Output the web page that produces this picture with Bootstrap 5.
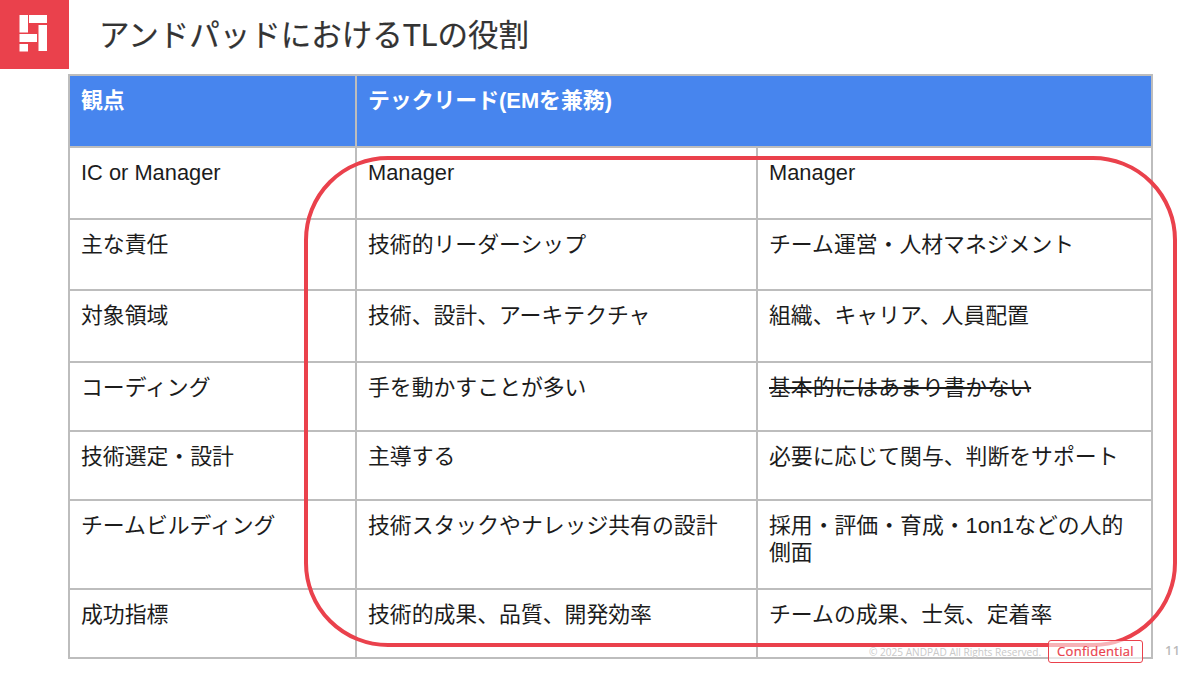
<!DOCTYPE html>
<html lang="ja">
<head>
<meta charset="utf-8">
<title>アンドパッドにおけるTLの役割</title>
<link rel="stylesheet" href="https://cdn.jsdelivr.net/npm/bootstrap@5.3.0/dist/css/bootstrap.min.css">
<style>
html,body{margin:0;height:100%;overflow:hidden;background:#fff}
.slide{position:relative;width:1200px;height:679px;font-family:"Liberation Sans","Noto Sans CJK JP",sans-serif;color:#1c1c1c}
.brand-box{width:69px;height:69px;background:#ea414c;flex:none}
.slide-title{margin:0 0 0 30px;font-family:Roboto,"Noto Sans CJK JP",sans-serif;font-size:30.500px;font-weight:400;line-height:71px;color:#333;-webkit-text-stroke:.2px #333}
.slide-table{table-layout:fixed;width:1083px;margin:3px 0 0 68px;border-collapse:collapse;font-size:21.850px;line-height:27px}
.slide-table td,.slide-table th{border:2px solid #bdbdbd;padding:11px 11px 0;vertical-align:top;font-weight:400}
.slide-table th{background:#4785ee;color:#fff;font-weight:700}
.h72{height:72px}.h71{height:71px}.h69{height:69px}.h89{height:89px}
.wipe{text-decoration:line-through}
.ring{position:absolute;left:304px;top:156px;width:873px;height:491px;border:4px solid #ea414c;border-radius:84px;pointer-events:none}
.copy{position:absolute;left:869px;top:645px;font-family:"Open Sans",sans-serif;font-size:10.100px;line-height:14px;color:#c9c9c9;white-space:nowrap}
.conf{position:absolute;left:1048px;top:640px;width:95px;height:23px;border:1.500px solid #ea414c;border-radius:3px;background:rgba(255,255,255,.6);color:#ea414c;font-family:"Open Sans",sans-serif;font-size:13px;font-weight:500;line-height:21px;text-align:center;letter-spacing:.3px;-webkit-text-stroke:.2px #ea414c}
.pageno{position:absolute;left:1165px;top:642px;font-family:"Open Sans",sans-serif;font-size:12.500px;line-height:17px;font-weight:600;color:#b9b9b9;letter-spacing:.6px}
</style>
</head>
<body>
<div class="slide">
  <header class="d-flex align-items-start">
    <div class="brand-box">
      <svg class="d-block" width="69" height="69" viewBox="0 0 69 69" aria-hidden="true">
        <path fill="#fff" d="M19.500 15h8.500v17.500h-8.500zM29 15h18v8H29zM38.500 25H47v26h-8.500zM19.500 34H37v8H19.500zM19.500 44H28v7.500h-8.500z"/>
      </svg>
    </div>
    <h1 class="slide-title">アンドパッドにおけるTLの役割</h1>
  </header>
  <table class="slide-table">
    <colgroup><col style="width:287px"><col style="width:401px"><col style="width:395px"></colgroup>
    <tbody>
      <tr class="h72"><th>観点</th><th colspan="2">テックリード(EMを兼務)</th></tr>
      <tr class="h72"><td>IC or Manager</td><td>Manager</td><td>Manager</td></tr>
      <tr class="h71"><td>主な責任</td><td>技術的リーダーシップ</td><td>チーム運営・人材マネジメント</td></tr>
      <tr class="h72"><td>対象領域</td><td>技術、設計、アーキテクチャ</td><td>組織、キャリア、人員配置</td></tr>
      <tr class="h69"><td>コーディング</td><td>手を動かすことが多い</td><td><span class="wipe">基本的にはあまり書かない</span></td></tr>
      <tr class="h69"><td>技術選定・設計</td><td>主導する</td><td>必要に応じて関与、判断をサポート</td></tr>
      <tr class="h89"><td>チームビルディング</td><td>技術スタックやナレッジ共有の設計</td><td>採用・評価・育成・1on1などの人的側面</td></tr>
      <tr class="h69"><td>成功指標</td><td>技術的成果、品質、開発効率</td><td>チームの成果、士気、定着率</td></tr>
    </tbody>
  </table>
  <div class="ring"></div>
  <div class="copy">© 2025 ANDPAD All Rights Reserved.</div>
  <div class="conf">Confidential</div>
  <div class="pageno">11</div>
</div>
<script src="https://cdn.jsdelivr.net/npm/bootstrap@5.3.0/dist/js/bootstrap.bundle.min.js"></script>
</body>
</html>
